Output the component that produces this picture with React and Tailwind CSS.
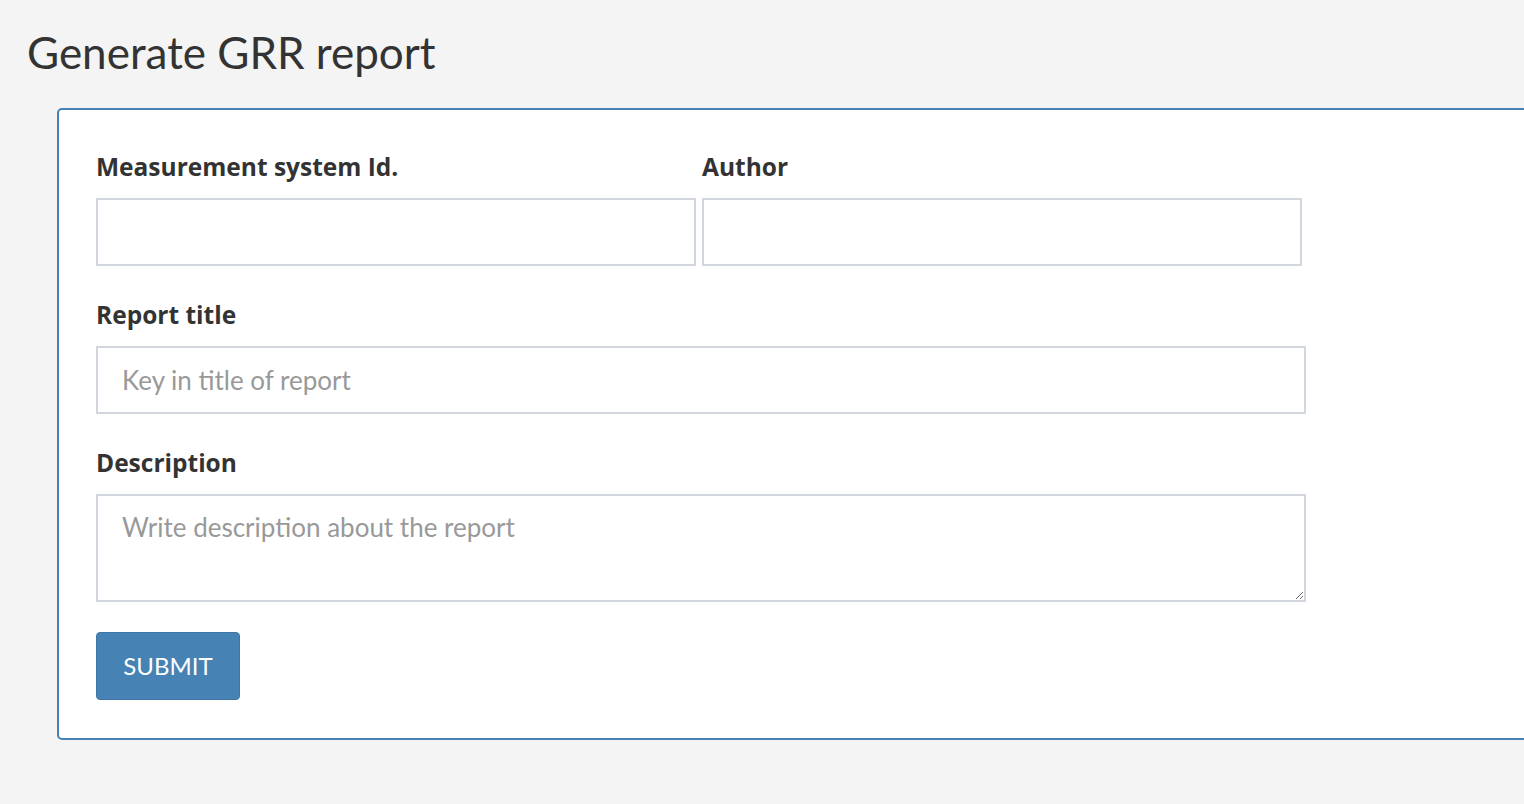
const fieldClass =
  "h-[68px] border-2 border-[#d2d6de] bg-white px-6 text-[26px] text-[#333] outline-none placeholder:text-[#999]";

const Label = function ({ children }) {
  return (
    <label className="mb-[14px] block font-['Open_Sans',sans-serif] text-[24.5px] font-bold leading-[34px] text-[#333]">
      {children}
    </label>
  );
};

const App = function () {
  return (
    <div
      className="min-h-[804px] w-screen overflow-hidden bg-[#f4f4f4] pt-[22px] pb-[64px]"
      style={{ fontFamily: "Lato, 'Open Sans', sans-serif" }}
    >
      <h1 className="pl-[27px] text-[44px] leading-[60px] font-normal text-[#333]">
        Generate GRR report
      </h1>

      <form
        className="mt-[26px] ml-[57px] w-[1520px] rounded-[5px] border-2 border-[#4682b4] bg-white pt-[40px] pb-[38px] pl-[37px]"
        onSubmit={(e) => e.preventDefault()}
      >
        <div className="flex flex-row gap-[6px]">
          <div className="flex w-[600px] flex-col">
            <Label>Measurement system Id.</Label>
            <input type="text" className={fieldClass} />
          </div>
          <div className="flex w-[600px] flex-col">
            <Label>Author</Label>
            <input type="text" className={fieldClass} />
          </div>
        </div>

        <div className="mt-[32px] flex w-[1210px] flex-col">
          <Label>Report title</Label>
          <input
            type="text"
            placeholder="Key in title of report"
            className={fieldClass}
          />
        </div>

        <div className="mt-[32px] flex w-[1210px] flex-col">
          <Label>Description</Label>
          <textarea
            placeholder="Write description about the report"
            className="h-[108px] border-2 border-[#d2d6de] bg-white px-6 py-[14px] text-[26px] leading-[34px] text-[#333] outline-none placeholder:text-[#999]"
          />
        </div>

        <button
          type="submit"
          className="mt-[30px] h-[68px] w-[144px] rounded-[4px] border border-[#3d76a6] bg-[#4682b4] text-[24px] text-white"
        >
          SUBMIT
        </button>
      </form>
    </div>
  );
};

export default App;
